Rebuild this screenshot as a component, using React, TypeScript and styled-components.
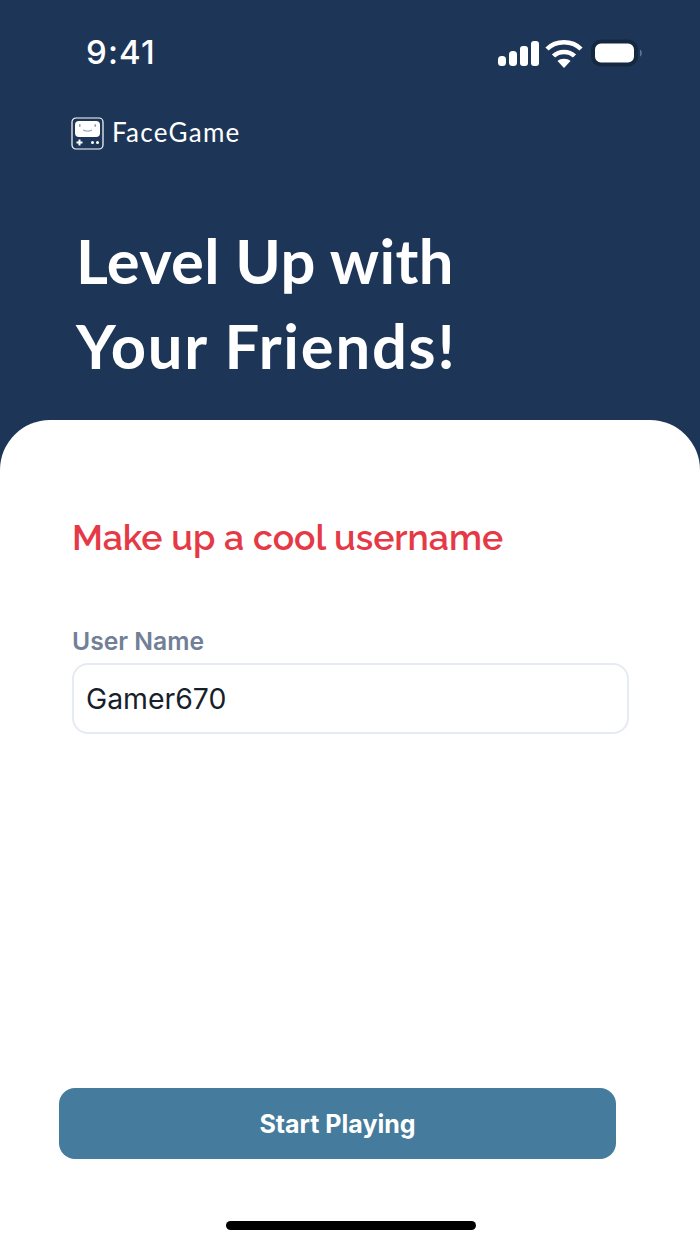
import React from "react";
import styled, { createGlobalStyle } from "styled-components";

const Global = createGlobalStyle`
  html, body { margin: 0; padding: 0; background: #fff; }
  * { box-sizing: border-box; }
`;

const Screen = styled.div`
  width: 700px;
  height: 1244px;
  display: flex;
  flex-direction: column;
  background: #1d3557;
  overflow: hidden;
`;

const StatusBar = styled.div`
  height: 104px;
  flex: none;
  display: flex;
  justify-content: space-between;
  align-items: flex-start;
  padding: 32px 58px 0 86px;
`;

const Time = styled.span`
  font-family: Inter, sans-serif;
  font-size: 33px;
  line-height: 40px;
  font-weight: 500;
  letter-spacing: 1.1px;
  color: #fff;
`;

const StatusIcons = styled.svg`
  width: 146px;
  height: 30px;
  margin-top: 7px;
`;

const Brand = styled.div`
  display: flex;
  align-items: center;
  gap: 8px;
  padding-left: 71px;
  height: 34px;
  margin-top: 12px;
`;

const BrandName = styled.span`
  font-family: Lato, sans-serif;
  font-size: 26px;
  line-height: 30px;
  margin-top: -3px;
  color: #fff;
  letter-spacing: 1.25px;
`;

const Headline = styled.h1`
  margin: 68px 0 0;
  padding-left: 76px;
  font-family: Lato, sans-serif;
  font-size: 61.5px;
  line-height: 85px;
  font-weight: 700;
  color: #fff;
  height: 202px;
`;

const HeadlineLine = styled.span<{ $spacing: number }>`
  display: block;
  letter-spacing: ${(p) => p.$spacing}px;
`;

const Card = styled.main`
  flex: 1;
  display: flex;
  flex-direction: column;
  background: #fff;
  border-radius: 50px 50px 0 0;
  padding: 95px 72px 0;
`;

const Prompt = styled.h2`
  margin: 0;
  font-family: Raleway, Lato, sans-serif;
  font-size: 35.6px;
  line-height: 46px;
  font-weight: 600;
  color: #e63946;
`;

const Label = styled.label`
  margin-top: 65px;
  font-family: Inter, sans-serif;
  font-size: 24.7px;
  line-height: 30px;
  font-weight: 600;
  color: #718096;
`;

const Field = styled.div`
  margin-top: 7px;
  width: 557px;
  height: 71px;
  display: flex;
  align-items: center;
  padding-left: 12px;
  background: #fff;
  border: 2px solid #e6eaf3;
  border-radius: 16px;
  font-family: Inter, sans-serif;
  font-size: 28.4px;
  color: #171e2c;
`;

const Spacer = styled.div`
  flex: 1;
`;

const Button = styled.button`
  align-self: flex-start;
  margin-left: -13px;
  width: 557px;
  height: 71px;
  border: none;
  border-radius: 16px;
  background: #457b9d;
  color: #fff;
  font-family: Inter, sans-serif;
  font-size: 25px;
  font-weight: 700;
`;

const HomeIndicator = styled.div`
  align-self: flex-start;
  margin: 62px 0 14px 154px;
  width: 250px;
  height: 9px;
  border-radius: 5px;
  background: #000;
`;

const Logo = () => (
  <svg width="33" height="33" viewBox="0 0 33 33" fill="none">
    <rect x="1" y="1" width="31" height="31" rx="4" stroke="#fff" strokeWidth="1.2" />
    <rect x="4" y="4" width="25" height="16" rx="4" fill="#fff" />
    <rect x="8" y="7" width="1.600" height="3" rx="0.8" fill="#8fa0b5" />
    <rect x="23.400" y="7" width="1.600" height="3" rx="0.8" fill="#8fa0b5" />
    <path d="M12 13c2 1.500 7 1.500 9 0" stroke="#7f92aa" strokeWidth="1" />
    <path d="M8.500 22.500v6M5.500 25.500h6" stroke="#fff" strokeWidth="2" />
    <circle cx="21.500" cy="25.500" r="1.500" fill="#fff" />
    <circle cx="26.500" cy="25.500" r="1.500" fill="#fff" />
  </svg>
);

export default function App() {
  return (
    <Screen>
      <Global />
      <StatusBar>
        <Time>9:41</Time>
        <StatusIcons viewBox="0 0 146 30">
          <rect x="2" y="17" width="8" height="10" rx="3.500" fill="#fff" />
          <rect x="13" y="12" width="8" height="15" rx="3.500" fill="#fff" />
          <rect x="24" y="7" width="8" height="20" rx="3" fill="#fff" />
          <rect x="35" y="2" width="8" height="25" rx="3" fill="#fff" />
          <path d="M51 10C60 1 76 1 85 10" stroke="#fff" strokeWidth="4.500" fill="none" />
          <path d="M57.500 17C63 11.500 73 11.500 78.500 17" stroke="#fff" strokeWidth="4.500" fill="none" />
          <path d="M61.500 22c3-3 10-3 13 0L68 29z" fill="#fff" />
          <rect x="97" y="2.500" width="43" height="23" rx="8" fill="#fff" stroke="#142840" strokeWidth="4" />
          <path d="M144 10.500c2.500 1 2.500 6 0 7z" fill="#5d7391" />
        </StatusIcons>
      </StatusBar>
      <Brand>
        <Logo />
        <BrandName>FaceGame</BrandName>
      </Brand>
      <Headline>
        <HeadlineLine $spacing={0.4}>Level Up with</HeadlineLine>
        <HeadlineLine $spacing={1.8}>Your Friends!</HeadlineLine>
      </Headline>
      <Card>
        <Prompt>Make up a cool username</Prompt>
        <Label>User Name</Label>
        <Field>Gamer670</Field>
        <Spacer />
        <Button>Start Playing</Button>
        <HomeIndicator />
      </Card>
    </Screen>
  );
}
